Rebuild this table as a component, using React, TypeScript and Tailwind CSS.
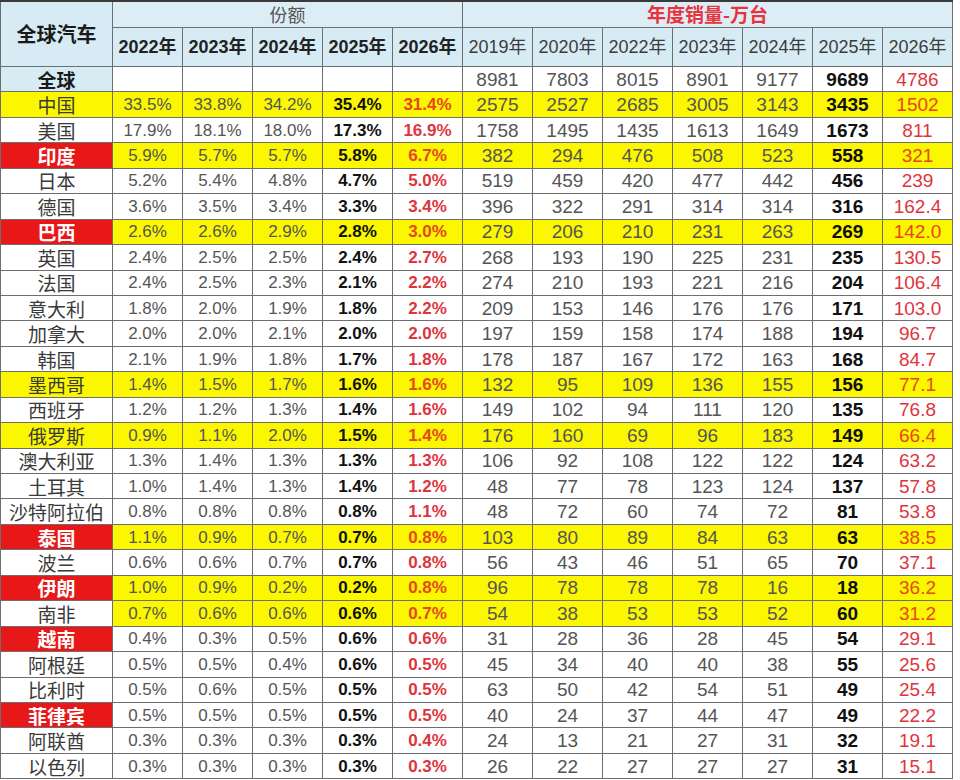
import React from "react";

type Kind = "global" | "white" | "yellow" | "redY" | "redW" | "whiteY";
type Row = { name: string; kind: Kind; shares: string[]; sales: string[] };

const rows: Row[] = [
  { name: "全球", kind: "global", shares: ["", "", "", "", ""], sales: ["8981", "7803", "8015", "8901", "9177", "9689", "4786"] },
  { name: "中国", kind: "yellow", shares: ["33.5%", "33.8%", "34.2%", "35.4%", "31.4%"], sales: ["2575", "2527", "2685", "3005", "3143", "3435", "1502"] },
  { name: "美国", kind: "white", shares: ["17.9%", "18.1%", "18.0%", "17.3%", "16.9%"], sales: ["1758", "1495", "1435", "1613", "1649", "1673", "811"] },
  { name: "印度", kind: "redY", shares: ["5.9%", "5.7%", "5.7%", "5.8%", "6.7%"], sales: ["382", "294", "476", "508", "523", "558", "321"] },
  { name: "日本", kind: "white", shares: ["5.2%", "5.4%", "4.8%", "4.7%", "5.0%"], sales: ["519", "459", "420", "477", "442", "456", "239"] },
  { name: "德国", kind: "white", shares: ["3.6%", "3.5%", "3.4%", "3.3%", "3.4%"], sales: ["396", "322", "291", "314", "314", "316", "162.4"] },
  { name: "巴西", kind: "redY", shares: ["2.6%", "2.6%", "2.9%", "2.8%", "3.0%"], sales: ["279", "206", "210", "231", "263", "269", "142.0"] },
  { name: "英国", kind: "white", shares: ["2.4%", "2.5%", "2.5%", "2.4%", "2.7%"], sales: ["268", "193", "190", "225", "231", "235", "130.5"] },
  { name: "法国", kind: "white", shares: ["2.4%", "2.5%", "2.3%", "2.1%", "2.2%"], sales: ["274", "210", "193", "221", "216", "204", "106.4"] },
  { name: "意大利", kind: "white", shares: ["1.8%", "2.0%", "1.9%", "1.8%", "2.2%"], sales: ["209", "153", "146", "176", "176", "171", "103.0"] },
  { name: "加拿大", kind: "white", shares: ["2.0%", "2.0%", "2.1%", "2.0%", "2.0%"], sales: ["197", "159", "158", "174", "188", "194", "96.7"] },
  { name: "韩国", kind: "white", shares: ["2.1%", "1.9%", "1.8%", "1.7%", "1.8%"], sales: ["178", "187", "167", "172", "163", "168", "84.7"] },
  { name: "墨西哥", kind: "yellow", shares: ["1.4%", "1.5%", "1.7%", "1.6%", "1.6%"], sales: ["132", "95", "109", "136", "155", "156", "77.1"] },
  { name: "西班牙", kind: "white", shares: ["1.2%", "1.2%", "1.3%", "1.4%", "1.6%"], sales: ["149", "102", "94", "111", "120", "135", "76.8"] },
  { name: "俄罗斯", kind: "yellow", shares: ["0.9%", "1.1%", "2.0%", "1.5%", "1.4%"], sales: ["176", "160", "69", "96", "183", "149", "66.4"] },
  { name: "澳大利亚", kind: "white", shares: ["1.3%", "1.4%", "1.3%", "1.3%", "1.3%"], sales: ["106", "92", "108", "122", "122", "124", "63.2"] },
  { name: "土耳其", kind: "white", shares: ["1.0%", "1.4%", "1.3%", "1.4%", "1.2%"], sales: ["48", "77", "78", "123", "124", "137", "57.8"] },
  { name: "沙特阿拉伯", kind: "white", shares: ["0.8%", "0.8%", "0.8%", "0.8%", "1.1%"], sales: ["48", "72", "60", "74", "72", "81", "53.8"] },
  { name: "泰国", kind: "redY", shares: ["1.1%", "0.9%", "0.7%", "0.7%", "0.8%"], sales: ["103", "80", "89", "84", "63", "63", "38.5"] },
  { name: "波兰", kind: "white", shares: ["0.6%", "0.6%", "0.7%", "0.7%", "0.8%"], sales: ["56", "43", "46", "51", "65", "70", "37.1"] },
  { name: "伊朗", kind: "redY", shares: ["1.0%", "0.9%", "0.2%", "0.2%", "0.8%"], sales: ["96", "78", "78", "78", "16", "18", "36.2"] },
  { name: "南非", kind: "whiteY", shares: ["0.7%", "0.6%", "0.6%", "0.6%", "0.7%"], sales: ["54", "38", "53", "53", "52", "60", "31.2"] },
  { name: "越南", kind: "redW", shares: ["0.4%", "0.3%", "0.5%", "0.6%", "0.6%"], sales: ["31", "28", "36", "28", "45", "54", "29.1"] },
  { name: "阿根廷", kind: "white", shares: ["0.5%", "0.5%", "0.4%", "0.6%", "0.5%"], sales: ["45", "34", "40", "40", "38", "55", "25.6"] },
  { name: "比利时", kind: "white", shares: ["0.5%", "0.6%", "0.5%", "0.5%", "0.5%"], sales: ["63", "50", "42", "54", "51", "49", "25.4"] },
  { name: "菲律宾", kind: "redW", shares: ["0.5%", "0.5%", "0.5%", "0.5%", "0.5%"], sales: ["40", "24", "37", "44", "47", "49", "22.2"] },
  { name: "阿联酋", kind: "white", shares: ["0.3%", "0.3%", "0.3%", "0.3%", "0.4%"], sales: ["24", "13", "21", "27", "31", "32", "19.1"] },
  { name: "以色列", kind: "white", shares: ["0.3%", "0.3%", "0.3%", "0.3%", "0.3%"], sales: ["26", "22", "27", "27", "27", "31", "15.1"] },
];

const shareYears = ["2022年", "2023年", "2024年", "2025年", "2026年"];
const salesYears = ["2019年", "2020年", "2022年", "2023年", "2024年", "2025年", "2026年"];

const cjk = "font-['Noto_Sans_CJK_SC',sans-serif]";
const num = "font-['Liberation_Sans','Noto_Sans_CJK_SC',sans-serif]";

function nameClass(kind: Kind) {
  if (kind === "global") return "bg-[#d7ebf5] text-[#1a1a1a] font-bold";
  if (kind === "yellow") return "bg-[#fbf700] text-[#3a3a3a]";
  if (kind === "redY" || kind === "redW") return "bg-[#e81818] text-white font-bold";
  return "bg-white text-[#3a3a3a]";
}

function restYellow(kind: Kind) {
  return kind === "yellow" || kind === "redY" || kind === "whiteY";
}

export default function App() {
  return (
    <div className="w-[960px] h-[780px] bg-white">
      <div className="w-[953px] border-t-2 border-[#3a3a3a] bg-[#6e6e6e] p-px pt-0 grid grid-cols-[111px_repeat(12,69px)] grid-rows-[25px_38px_repeat(28,24.45px)] gap-px">
        <div className={`row-span-2 bg-[#d7ebf5] flex items-center justify-center ${cjk} text-[20px] font-bold text-[#1a1a1a]`}>
          全球汽车
        </div>
        <div className={`col-span-5 bg-[#dcedf6] flex items-center justify-center ${cjk} text-[18px] text-[#555]`}>
          份额
        </div>
        <div className={`col-span-7 bg-[#dcedf6] flex items-center justify-center ${cjk} text-[19px] font-bold text-[#e8323c]`}>
          年度销量-万台
        </div>
        {shareYears.map((y) => (
          <div key={"s" + y} className={`bg-[#d7ebf5] flex items-center justify-center ${num} text-[18px] font-bold text-[#222]`}>
            {y}
          </div>
        ))}
        {salesYears.map((y) => (
          <div key={"v" + y} className={`bg-[#d7ebf5] flex items-center justify-center ${num} text-[18px] text-[#3c3c3c]`}>
            {y}
          </div>
        ))}
        {rows.map((r) => {
          const y = restYellow(r.kind);
          const bg = y ? "bg-[#fbf700]" : "bg-white";
          const red = y ? "text-[#e8461c]" : "text-[#e0343c]";
          return (
            <React.Fragment key={r.name}>
              <div className={`flex items-center justify-center ${cjk} text-[19px] leading-none ${nameClass(r.kind)}`}>
                {r.name}
              </div>
              {r.shares.map((s, i) => (
                <div
                  key={"s" + i}
                  className={`flex items-center justify-center ${num} text-[17px] leading-none ${bg} ${
                    i === 3 ? "font-bold text-[#111]" : i === 4 ? `font-bold ${red}` : "text-[#555]"
                  }`}
                >
                  {s}
                </div>
              ))}
              {r.sales.map((s, i) => (
                <div
                  key={"v" + i}
                  className={`flex items-center justify-center ${num} text-[19px] leading-none ${bg} ${
                    i === 5 ? "font-bold text-[#111]" : i === 6 ? red : "text-[#555]"
                  }`}
                >
                  {s}
                </div>
              ))}
            </React.Fragment>
          );
        })}
      </div>
    </div>
  );
}
